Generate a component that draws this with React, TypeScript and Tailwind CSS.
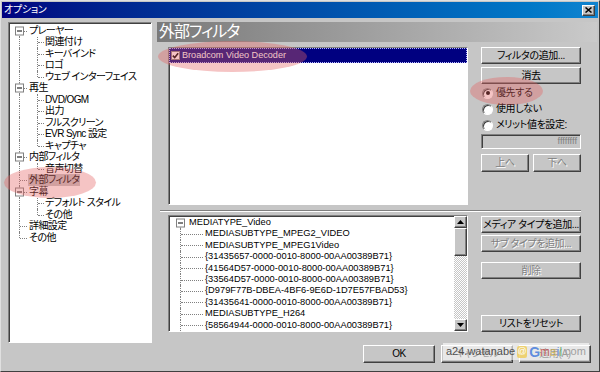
import React from "react";

const raised =
  "border border-t-white border-l-white border-r-[#404040] border-b-[#404040] shadow-[inset_-1px_-1px_0_#808080] bg-[#c6c6c6]";
const sunken =
  "border border-t-[#808080] border-l-[#808080] border-r-white border-b-white shadow-[inset_1px_1px_0_#404040]";
const grayed = "text-[#808080] [text-shadow:1px_1px_0_#fff]";
const dotted = "border-dotted border-[#808080]";

function Btn({ label, disabled, className }: { label: string; disabled?: boolean; className?: string }) {
  return (
    <div
      className={`${raised} flex items-center justify-center text-[10px] leading-none tracking-[-0.4px] whitespace-nowrap ${
        disabled ? grayed : "text-black"
      } ${className ?? ""}`}
    >
      {label}
    </div>
  );
}

function MinusBox({ className }: { className: string }) {
  return (
    <span
      className={`absolute top-1/2 -translate-y-1/2 w-[9px] h-[9px] bg-white border border-[#808080] flex items-center justify-center ${className}`}
    >
      <span className="w-[5px] h-[1px] bg-black" />
    </span>
  );
}

type TreeNode = { label: string; level: 0 | 1; box?: boolean; last?: boolean; selected?: boolean };

const optionTree: TreeNode[] = [
  { label: "プレーヤー", level: 0, box: true },
  { label: "関連付け", level: 1 },
  { label: "キーバインド", level: 1 },
  { label: "ロゴ", level: 1 },
  { label: "ウェブ インターフェイス", level: 1, last: true },
  { label: "再生", level: 0, box: true },
  { label: "DVD/OGM", level: 1 },
  { label: "出力", level: 1 },
  { label: "フルスクリーン", level: 1 },
  { label: "EVR Sync 設定", level: 1 },
  { label: "キャプチャ", level: 1, last: true },
  { label: "内部フィルタ", level: 0, box: true },
  { label: "音声切替", level: 1, last: true },
  { label: "外部フィルタ", level: 0, selected: true },
  { label: "字幕", level: 0, box: true },
  { label: "デフォルト スタイル", level: 1 },
  { label: "その他", level: 1, last: true },
  { label: "詳細設定", level: 0 },
  { label: "その他", level: 0 },
];

const mediaTypes = [
  "MEDIASUBTYPE_MPEG2_VIDEO",
  "MEDIASUBTYPE_MPEG1Video",
  "{31435657-0000-0010-8000-00AA00389B71}",
  "{41564D57-0000-0010-8000-00AA00389B71}",
  "{33564D57-0000-0010-8000-00AA00389B71}",
  "{D979F77B-DBEA-4BF6-9E6D-1D7E57FBAD53}",
  "{31435641-0000-0010-8000-00AA00389B71}",
  "MEDIASUBTYPE_H264",
  "{58564944-0000-0010-8000-00AA00389B71}",
];

function OptionRow({ node, index, count }: { node: TreeNode; index: number; count: number }) {
  const first = index === 0;
  const lastRoot = index === count - 1;
  return (
    <div className={`relative h-[11.5px] flex items-center leading-none ${node.level === 0 ? "pl-[19px]" : "pl-[35px]"}`}>
      <span
        className={`absolute left-[10px] border-l ${dotted} ${
          first ? "top-1/2 bottom-0" : lastRoot ? "top-0 h-1/2" : "top-0 bottom-0"
        }`}
      />
      {node.level === 0 ? (
        <span className={`absolute left-[11px] top-1/2 w-[7px] border-t ${dotted}`} />
      ) : (
        <>
          <span className={`absolute left-[28px] top-0 border-l ${dotted} ${node.last ? "h-1/2" : "bottom-0"}`} />
          <span className={`absolute left-[29px] top-1/2 w-[6px] border-t ${dotted}`} />
        </>
      )}
      {node.box && <MinusBox className="left-[6px]" />}
      <span className={`whitespace-nowrap px-[1px] py-[1px] ${node.selected ? "bg-[#c6c6c6]" : ""}`}>{node.label}</span>
    </div>
  );
}

function Arrow({ up }: { up?: boolean }) {
  return (
    <div className={`${raised} h-[12px] flex items-center justify-center`}>
      <svg width="7" height="4" viewBox="0 0 7 4">
        <polygon points={up ? "3.5,0 7,4 0,4" : "0,0 7,0 3.5,4"} fill="#000" />
      </svg>
    </div>
  );
}

export default function App() {
  return (
    <div className="relative w-[600px] h-[372px] overflow-hidden bg-[#c6c6c6] border border-t-[#e0e0e0] border-l-[#e0e0e0] border-r-[#404040] border-b-[#404040] p-[1px] font-['Liberation_Sans','Noto_Sans_CJK_JP',sans-serif] [font-feature-settings:'palt'] text-black">
      {/* title bar */}
      <div className="h-[16px] flex items-center justify-between bg-linear-to-r from-[#000080] to-[#1084d0] pl-[2px] pr-[3px]">
        <span className="text-[10px] leading-none tracking-[-0.3px] text-white">オプション</span>
        <div className={`${raised} w-[13px] h-[11px] flex items-center justify-center`}>
          <svg width="7" height="6" viewBox="0 0 7 6">
            <path d="M0.5 0.5 L6.5 5.5 M6.5 0.5 L0.5 5.5" stroke="#000" strokeWidth="1.5" />
          </svg>
        </div>
      </div>

      {/* body */}
      <div className="flex mt-[4px] h-[321px]">
        <div className={`${sunken} bg-white ml-[6px] w-[144px] h-full overflow-hidden pt-[2px] text-[10px] tracking-[-0.6px]`}>
          {optionTree.map((n, i) => (
            <OptionRow key={i} node={n} index={i} count={optionTree.length} />
          ))}
        </div>

        <div className="ml-[5px] flex-1 mr-[1px] flex flex-col">
          <div className="h-[20px] bg-linear-to-r from-[#7a7a7a] to-[#cacaca] flex items-center pl-[2px] text-[16px] tracking-[-1px] leading-none text-white">
            外部フィルタ
          </div>

          <div className="pl-[11px] pt-[5px]">
            <div className="flex">
              <div className={`${sunken} bg-white w-[300px] h-[158px]`}>
                <div className="h-[15px] bg-[#000080] border border-dotted border-[#b4b4ff] flex items-center pl-[1px]">
                  <span className="w-[9px] h-[9px] bg-white border border-[#808080] flex items-center justify-center">
                    <svg width="7" height="7" viewBox="0 0 7 7">
                      <path d="M0.8 3.6 L2.7 5.5 L6.2 1.2" stroke="#000" strokeWidth="1.6" fill="none" />
                    </svg>
                  </span>
                  <span className="ml-[2px] text-[9.1px] leading-none text-white font-['Liberation_Sans',sans-serif]">
                    Broadcom Video Decoder
                  </span>
                </div>
              </div>

              <div className="ml-[13px] w-[100px] flex flex-col text-[10px]">
                <Btn label="フィルタの追加..." className="h-[17px]" />
                <Btn label="消去" className="h-[17px] mt-[3px]" />
                <div className="mt-[1px] tracking-[-0.4px]">
                  {["優先する", "使用しない", "メリット値を設定:"].map((t, i) => (
                    <div key={t} className="h-[16px] flex items-center leading-none">
                      <span className="ml-[1px] w-[11px] h-[11px] rounded-full bg-white border border-t-[#808080] border-l-[#808080] border-r-white border-b-white shadow-[inset_1px_1px_0_#404040] flex items-center justify-center">
                        {i === 0 && <span className="w-[4px] h-[4px] rounded-full bg-black" />}
                      </span>
                      <span className="ml-[3px] whitespace-nowrap">{t}</span>
                    </div>
                  ))}
                </div>
                <div className={`${sunken} bg-[#c6c6c6] mt-[1px] h-[15px] flex items-center justify-end pr-[3px] text-[9.3px] leading-none text-[#808080] font-['Liberation_Sans',sans-serif]`}>
                  ffffffff
                </div>
                <div className="mt-[5px] flex justify-between">
                  <Btn label="上へ" disabled className="w-[48px] h-[18px]" />
                  <Btn label="下へ" disabled className="w-[48px] h-[18px]" />
                </div>
              </div>
            </div>

            <div className="mt-[5px] ml-[-8px] w-[421px] h-[2px] border-t border-t-[#808080] border-b border-b-white" />

            <div className="mt-[3px] flex">
              <div className={`${sunken} bg-white w-[300px] h-[117px] flex overflow-hidden`}>
                <div className="flex-1 pt-[1px] overflow-hidden text-[9.3px] font-['Liberation_Sans',sans-serif]">
                  <div className="relative h-[11.4px] flex items-center pl-[20px] leading-none">
                    <span className={`absolute left-[11px] top-1/2 bottom-0 border-l ${dotted}`} />
                    <MinusBox className="left-[7px]" />
                    <span className="whitespace-nowrap">MEDIATYPE_Video</span>
                  </div>
                  {mediaTypes.map((m) => (
                    <div key={m} className="relative h-[11.4px] flex items-center pl-[36px] leading-none">
                      <span className={`absolute left-[11px] top-0 bottom-0 border-l ${dotted}`} />
                      <span className={`absolute left-[12px] top-1/2 w-[22px] border-t ${dotted}`} />
                      <span className="whitespace-nowrap">{m}</span>
                    </div>
                  ))}
                </div>
                <div className="w-[13px] h-full flex flex-col">
                  <Arrow up />
                  <div className={`${raised} h-[28px]`} />
                  <div className="flex-1 bg-[repeating-conic-gradient(#c6c6c6_0_25%,#ffffff_0_50%)] bg-[length:2px_2px]" />
                  <Arrow />
                </div>
              </div>

              <div className="ml-[13px] w-[100px] flex flex-col">
                <Btn label="メディア タイプを追加..." className="h-[17px] mt-[1px]" />
                <Btn label="サブ タイプを追加..." disabled className="h-[17px] mt-[2px]" />
                <Btn label="削除" disabled className="h-[17px] mt-[10px]" />
                <Btn label="リストをリセット" className="h-[17px] mt-[36px]" />
              </div>
            </div>
          </div>
        </div>
      </div>

      {/* footer */}
      <div className="mt-[2px] flex justify-end gap-[6px] pr-[7px]">
        <Btn label="OK" className="w-[72px] h-[18px]" />
        <Btn label="キャンセル" className="w-[72px] h-[18px]" />
        <Btn label="適用(A)" className="w-[72px] h-[18px]" />
      </div>

      {/* annotation marks */}
      <div className="absolute left-[3px] top-[166px] w-[92px] h-[31px] rounded-[50%] bg-[rgba(230,100,100,0.38)] pointer-events-none" />
      <div className="absolute left-[157px] top-[40px] w-[149px] h-[31px] rounded-[50%] bg-[rgba(230,100,100,0.38)] pointer-events-none" />
      <div className="absolute left-[469px] top-[76px] w-[73px] h-[28px] rounded-[50%] bg-[rgba(230,100,100,0.38)] pointer-events-none" />

      {/* watermark */}
      <div className="absolute left-[442px] top-[342px] w-[146px] h-[17px] bg-white/60 flex items-center px-[3px] leading-none font-['Liberation_Sans',sans-serif] pointer-events-none">
        <span className="text-[11px] text-[#505050]">a24.watanabe</span>
        <span className="ml-[2px] w-[10px] h-[12px] rounded-[2px] bg-[#f0c840]/70 text-white text-[9px] flex items-center justify-center">@</span>
        <span className="ml-[2px] text-[14px] font-bold text-[#3a76dc]/80">G</span>
        <span className="text-[12px] text-[#d04040]/70">m</span>
        <span className="text-[12px] text-[#e0b020]/60">a</span>
        <span className="text-[12px] text-[#3a76dc]/70">i</span>
        <span className="text-[12px] text-[#40a040]/70">l</span>
        <span className="text-[11px] text-[#a0a0a0]">.com</span>
      </div>
    </div>
  );
}
